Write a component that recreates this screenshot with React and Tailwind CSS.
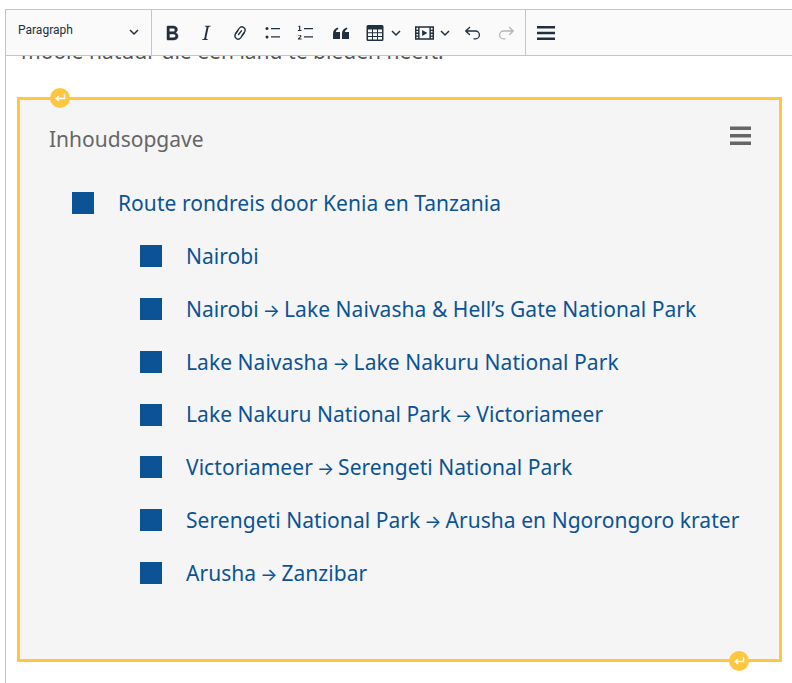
import React from "react";

const sub = [
  "Nairobi",
  "Nairobi → Lake Naivasha & Hell’s Gate National Park",
  "Lake Naivasha → Lake Nakuru National Park",
  "Lake Nakuru National Park → Victoriameer",
  "Victoriameer → Serengeti National Park",
  "Serengeti National Park → Arusha en Ngorongoro krater",
  "Arusha → Zanzibar",
];

const Chevron = () => (
  <svg width="12" height="12" viewBox="0 0 12 12" className="text-[#222f3e]">
    <path d="M2 4l4 4 4-4" fill="none" stroke="currentColor" strokeWidth="1.5" />
  </svg>
);

const Icon = ({ children, className = "" }) => (
  <svg width="24" height="24" viewBox="0 0 24 24" fill="currentColor" className={className}>
    {children}
  </svg>
);

const ReturnHandle = ({ className }) => (
  <div className={`absolute w-5 h-5 rounded-full bg-[#ffc640] flex items-center justify-center ${className}`}>
    <svg width="12" height="12" viewBox="0 0 12 12">
      <path d="M10.5 2v4.500H2.500M5 4L2.200 6.500 5 9" fill="none" stroke="#fff" strokeWidth="1.500" />
    </svg>
  </div>
);

// the arrow is narrower in the picture than in Noto Sans
const Label = ({ text }) => {
  const parts = text.split(" → ");
  if (parts.length === 1) return <span className="ml-[24px] whitespace-nowrap">{text}</span>;
  return (
    <span className="ml-[24px] whitespace-nowrap">
      {parts[0]}{" "}
      <span className="font-['Inter',sans-serif] text-[18px] leading-none mx-[-1.5px] tracking-normal">→</span>{" "}
      {parts[1]}
    </span>
  );
};

const Row = ({ text, nested }) => (
  <li className={`flex items-center h-[52.85px] ${nested ? "pl-[68px]" : ""}`}>
    <span className="w-[22px] h-[22px] -mt-[1px] bg-[#0b5394] shrink-0" />
    <Label text={text} />
  </li>
);

export default function App() {
  return (
    <div className="h-[683px] w-[792px] overflow-hidden bg-white pt-[9px] pl-[5px] flex flex-col font-['Noto_Sans',sans-serif]">
      {/* toolbar */}
      <div className="relative z-10 h-[47px] shrink-0 flex items-stretch bg-[#fafafa] border border-r-0 border-[#c5c5c5] text-[#222f3e]">
        <div className="w-[146px] border-r border-[#c5c5c5] flex justify-between pl-[12px] pr-[11px]">
          <span className="text-xs mt-[12px] font-['Roboto',sans-serif]">Paragraph</span>
          <span className="mt-[16px]"><Chevron /></span>
        </div>
        <div className="w-[374px] border-r border-[#c5c5c5] flex items-center pl-[8px]">
          <Icon className="mr-[10px]">
            <path stroke="currentColor" strokeWidth="0.5" d="M7.800 19c-.3 0-.5 0-.6-.2l-.2-.5V5.700c0-.2 0-.4.2-.5l.6-.2h5c1.500 0 2.700.3 3.500 1 .7.6 1.100 1.400 1.100 2.500a3 3 0 0 1-.6 1.900c-.4.6-1 1-1.600 1.200.4.1.9.3 1.300.6s.8.7 1 1.200c.4.4.5 1 .5 1.600 0 1.300-.4 2.300-1.300 3-.8.7-2.100 1-3.800 1H7.800zm5-8.300c.6 0 1.200-.1 1.600-.5.4-.3.6-.7.6-1.300 0-1.100-.8-1.700-2.300-1.700H9.300v3.500h3.400zm.5 6c.7 0 1.300-.1 1.700-.4.4-.4.6-.9.6-1.500s-.2-1-.7-1.400c-.4-.3-1-.4-2-.4H9.400v3.800h4z" />
          </Icon>
          <Icon className="mr-[10px]">
            <path d="M16.700 4.700l-.1.9h-.3c-.6 0-1 0-1.400.3-.3.3-.4.6-.5 1.100l-2.100 9.800v.6c0 .5.4.8 1.400.8h.2l-.2.8H8l.2-.8h.2c1.100 0 1.800-.5 2-1.500l2-9.800.1-.5c0-.6-.4-.8-1.400-.8h-.3l.2-.9h5.800z" />
          </Icon>
          <Icon className="mr-[9px]">
            <g fill="none" stroke="currentColor" strokeWidth="1.300" strokeLinecap="round">
              <path d="M9.800 9.800l-2.400 3.400a3.200 3.200 0 0 0 5.200 3.700l3.800-5.300" />
              <path d="M14.200 14.200l2.400-3.400a3.200 3.200 0 0 0-5.200-3.700L7.600 12.400" />
              <path d="M10.500 13.500l3-3.700" />
            </g>
          </Icon>
          <Icon className="mr-[9px]">
            <path d="M10 7h9v1.300h-9zM10 15.300h9v1.300h-9z" />
            <circle cx="6" cy="7.600" r="1.500" />
            <circle cx="6" cy="16" r="1.500" />
          </Icon>
          <Icon className="mr-[11px]">
            <path d="M10 7h9v1.300h-9zM10 15.300h9v1.300h-9zM4.800 4.700h1.500V9h1.200v1H3.900V9h1.200V5.700h-1z" />
            <path d="M4 14.400c.7-.5 3-.9 3.400.4.400 1.300-1.500 2-2 2.700h2.200v1H3.900v-1c.6-1 2.400-1.700 2.200-2.600-.2-.6-1.200-.3-2 .1z" />
          </Icon>
          <Icon className="mr-[10px]">
            <path d="M4 18v-5.300C4 9.500 5.800 7.400 8.600 6.500l.9 1.600c-1.600.7-2.500 1.700-2.600 3H11V18zM13 18v-5.300c0-3.200 1.800-5.300 4.600-6.200l.9 1.600c-1.600.7-2.500 1.700-2.600 3H20V18z" />
          </Icon>
          <Icon className="mr-[3px]">
            <path
              fillRule="evenodd"
              d="M5 4h14a1.500 1.500 0 0 1 1.500 1.500v13A1.500 1.500 0 0 1 19 20H5a1.500 1.500 0 0 1-1.500-1.500v-13A1.500 1.500 0 0 1 5 4zm0 4.500v2.800h4V8.500zm5 0v2.800h4V8.500zm5 0v2.800h4V8.500zM5 12.300v2.700h4v-2.700zm5 0v2.700h4v-2.700zm5 0v2.700h4v-2.700zM5 16v2.500h4V16zm5 0v2.500h4V16zm5 0v2.500h4V16z"
            />
          </Icon>
          <span className="mr-[12px]"><Chevron /></span>
          <span className="mr-[2px] w-[20px] flex justify-center">
            <svg width="19" height="14" viewBox="0 0 20 14" fill="currentColor">
              <path fillRule="evenodd" d="M0 0h20v14H0zm1.500 1.500v2h1.800v-2zm0 3.500v1.600h1.800V5zm0 3v1.600h1.800V8zm0 3v1.600h1.800V11zm15.200-9.500v2h1.800v-2zm0 3.500v1.600h1.800V5zm0 3v1.600h1.800V8zm0 3v1.600h1.800V11zM4.800 1.500v11h10.400v-11zM7.500 3.800l5.500 3.200-5.500 3.200z" />
            </svg>
          </span>
          <span className="ml-[3px] mr-[10px]"><Chevron /></span>
          <Icon className="mr-[9px]">
            <path d="M8.500 6.500L4.700 10l3.800 3.500M4.700 10H14.500a3.900 3.900 0 0 1 0 7.800H13" fill="none" stroke="currentColor" strokeWidth="1.300" strokeLinecap="round" strokeLinejoin="round" />
          </Icon>
          <Icon className="text-[#b2b6bb]">
            <path d="M15.500 6.500l3.800 3.500-3.800 3.500M19.300 10H9.500a3.900 3.900 0 0 0 0 7.800H11" fill="none" stroke="currentColor" strokeWidth="1.300" strokeLinecap="round" strokeLinejoin="round" />
          </Icon>
        </div>
        <div className="flex items-center pl-[8px]">
          <Icon>
            <path d="M3 5h18v2.500H3zM3 10.800h18v2.500H3zM3 16.500h18V19H3z" />
          </Icon>
        </div>
      </div>

      {/* editor content, scrolled */}
      <div className="flex-1 overflow-hidden border-l border-[#c5c5c5] pl-[11px] pr-[10px]">
        <p className="-mt-[18px] pl-[4px] text-[21px] leading-[27px] text-[#555] tracking-[0.02px] whitespace-nowrap">
          mooie natuur die een land te bieden heeft.
        </p>
        <div className="relative mt-[32px] h-[565px] border-[3px] border-[#ffc640] bg-[#f5f5f5] pl-[29px] pr-[28px] pt-[24px]">
          <ReturnHandle className="-top-[12px] left-[30px]" />
          <ReturnHandle className="-bottom-[12px] right-[30px]" />
          <div className="flex items-start justify-between text-[#666]">
            <h2 className="text-[21px] leading-[30px] tracking-[0px]">Inhoudsopgave</h2>
            <svg width="24" height="24" viewBox="0 0 24 24" fill="currentColor" className="mr-[-1px]">
              <path d="M2 2.500h21v3.500H2zM2 10h21v3.500H2zM2 17.500h21V21H2z" />
            </svg>
          </div>
          <ul className="mt-[23.3px] pl-[23px] text-[21px] tracking-[0.05px] text-[#0b5394]">
            <Row text="Route rondreis door Kenia en Tanzania" />
            {sub.map((text, i) => (
              <Row key={i} text={text} nested />
            ))}
          </ul>
        </div>
      </div>
    </div>
  );
}
